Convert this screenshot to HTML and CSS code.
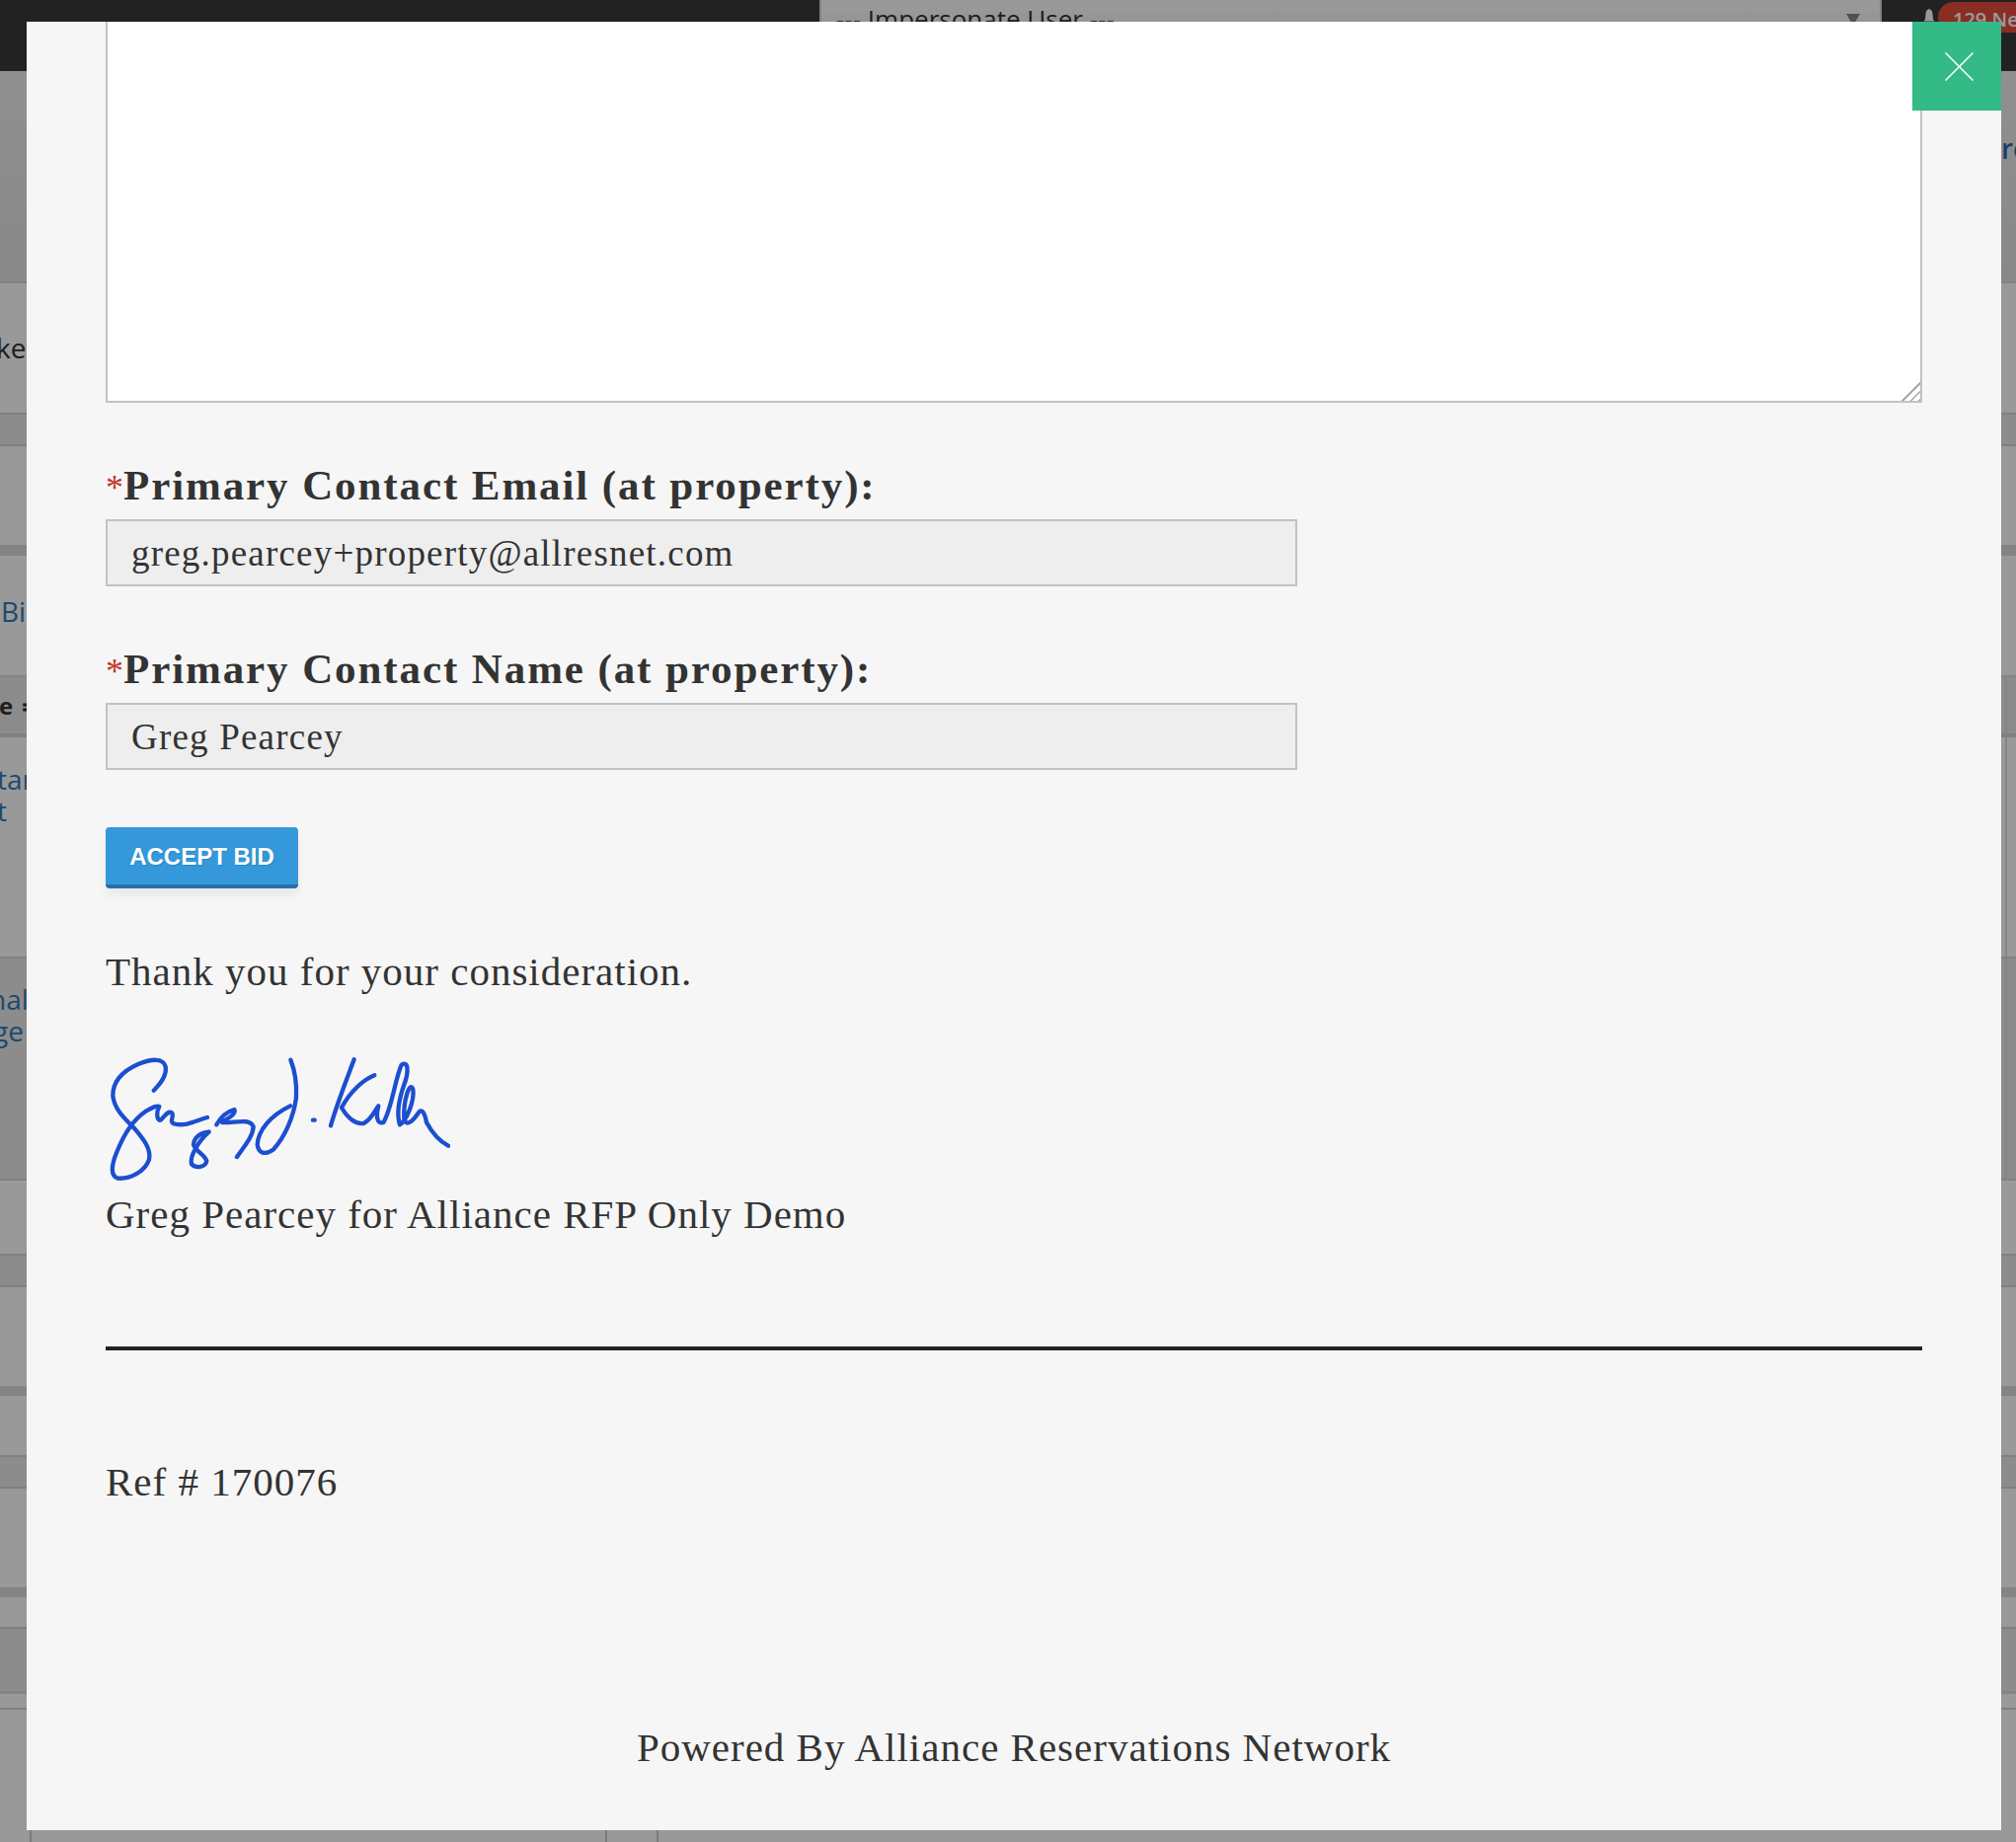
FILE: index.html
```html
<!DOCTYPE html>
<html lang="en">
<head>
    <meta charset="UTF-8">
    <title>Accept Bid</title>
    <link rel="stylesheet" href="styles.css">
</head>
<body>
    <header class="topbar">
        <div class="impersonate">
            <span>--- Impersonate User ---</span>
            <i class="caret"></i>
        </div>
        <svg class="bell" viewBox="0 0 10 14"><path d="M5 0C3 1 1.500 2 1.500 5L1 11H0V12.500H10V11H9L8.500 5C8.500 2 7 1 5 0Z"/></svg>
        <div class="badge">129 New</div>
    </header>

    <!-- Page behind the modal -->
    <main class="page">
        <div class="row head"><a class="right-link">re</a></div>
        <div class="row tabs"><span class="clip-text">ke</span></div>
        <div class="row sub"></div>
        <div class="row block"></div>
        <div class="row gap"></div>
        <div class="row title"><a class="clip-link">Bi</a></div>
        <div class="row thead"><b class="clip-head">e ≑</b><i class="cell-end"></i></div>
        <div class="row tr tr-first"><a class="clip-link">tar<br>t</a><i class="cell-end"></i></div>
        <div class="row tr tr-second"><a class="clip-link">nal<br>ge</a><i class="cell-end"></i></div>
        <div class="row tfoot"></div>
        <div class="row sub"></div>
        <div class="row block"></div>
        <div class="row gap"></div>
        <div class="row foot"></div>
        <div class="row sub"></div>
        <div class="row block"></div>
        <div class="row gap"></div>
        <div class="row pager"></div>
        <div class="row pager-sub"></div>
        <div class="row thin"></div>
        <div class="row rest">
            <i class="col col-a"></i>
            <i class="col col-b"></i>
            <i class="col col-c"></i>
        </div>
    </main>

    <div class="overlay"></div>

    <!-- Accept bid modal -->
    <section class="modal">
        <button class="close-btn" type="button">
            <svg viewBox="0 0 29 29"><path d="M0.500 0.500L28.500 28.500M28.500 0.500L0.500 28.500"/></svg>
        </button>

        <div class="notes-wrap">
            <textarea class="notes" readonly></textarea>
        </div>

        <div class="field">
            <label><span class="req">*</span>Primary Contact Email (at property):</label>
            <input type="text" value="greg.pearcey+property@allresnet.com" readonly>
        </div>
        <div class="field">
            <label><span class="req">*</span>Primary Contact Name (at property):</label>
            <input type="text" value="Greg Pearcey" readonly>
        </div>

        <button class="accept-btn" type="button">ACCEPT BID</button>

        <p class="thanks">Thank you for your consideration.</p>

        <svg class="signature" viewBox="0 0 1200 480">
            <path d="M197 158C215 140 238 115 233 85C225 58 190 62 150 78C105 98 72 130 73 175C78 215 105 240 140 275C165 305 190 335 183 368C170 405 125 428 88 425C65 418 68 385 85 345C105 295 130 250 172 222C190 212 205 202 214 207C205 222 205 250 218 248C232 235 240 218 252 226C262 235 240 255 262 260C295 268 330 248 360 240"/>
            <path d="M365 284C340 286 320 300 318 322C322 342 352 352 358 372C355 392 325 396 312 382C305 358 335 310 365 284"/>
            <path d="M388 262C400 240 420 222 442 216C450 232 415 245 405 255C440 258 490 240 500 268C498 300 470 330 450 360"/>
            <path d="M613 65C625 95 632 140 630 180C622 240 595 300 560 338C535 355 515 350 512 322C515 280 550 235 612 205"/>
            <path d="M681 248L686 248"/>
            <path d="M806 64C785 120 755 195 735 265"/>
            <path d="M868 112C835 125 795 160 768 210C785 240 810 262 835 258C860 245 868 220 880 205C872 235 875 262 895 255C920 215 930 125 950 80C972 65 972 105 958 140C942 185 935 230 945 262C965 250 990 190 985 155C975 125 955 190 958 245C965 270 985 250 1000 228C1012 210 1020 225 1026 255C1045 290 1065 312 1092 326"/>
        </svg>
        <p class="sign-name">Greg Pearcey for Alliance RFP Only Demo</p>

        <hr class="divider">

        <p class="ref">Ref # 170076</p>

        <p class="powered">Powered By Alliance Reservations Network</p>
    </section>
</body>
</html>
```

FILE: styles.css
```css
* {
    box-sizing: border-box;
}

body {
    margin: 0;
    height: 1866px;
    overflow: hidden;
    background-color: #fff;
    color: #333;
    font-family: "Open Sans", sans-serif;
    font-size: 28px;
}

/* top bar */
.topbar {
    display: flex;
    align-items: flex-start;
    height: 72px;
    background-color: #393939;
    overflow: hidden;
}

.impersonate {
    display: flex;
    flex-shrink: 0;
    align-items: center;
    justify-content: space-between;
    width: 1076px;
    height: 60px;
    margin: -11px 0 0 830px;
    padding: 0 20px 0 15px;
    background: linear-gradient(#fff 30%, #ececec);
    border: 2px solid #ddd;
    border-radius: 4px;
    font-size: 26px;
}

.caret {
    margin-top: 2px;
    border-left: 7px solid transparent;
    border-right: 7px solid transparent;
    border-top: 12px solid #888;
}

.bell {
    flex-shrink: 0;
    width: 10px;
    height: 14px;
    margin: 9px 0 0 43px;
    fill: #fff;
}

.badge {
    flex-shrink: 0;
    width: 120px;
    height: 31px;
    margin: 2px 0 0 4px;
    padding: 5px 0 0 15px;
    background-color: #e74c3c;
    border-radius: 16px 0 0 16px;
    color: #fff;
    font-size: 20px;
    font-weight: 600;
    line-height: 26px;
    white-space: nowrap;
}

/* page behind */
.page {
    display: flex;
    flex-direction: column;
    height: 1794px;
}

.row {
    display: flex;
    flex-shrink: 0;
    border-bottom: 2px solid #d5d5d5;
}

.head {
    height: 215px;
    background: linear-gradient(#f0f0f0, #e4e4e4);
    justify-content: flex-end;
    padding-top: 59px;
}

.tabs {
    height: 133px;
    padding-bottom: 2px;
    align-items: center;
}

.sub {
    height: 32px;
    background-color: #eaeaea;
}

.block {
    height: 100px;
    border-bottom: 0;
}

.gap {
    height: 10px;
    background-color: #dcdcdc;
    border-bottom: 0;
}

.title {
    height: 122px;
    padding-bottom: 10px;
    align-items: center;
    border-bottom: 0;
    border-top: 1px solid #e0e0e0;
}

.thead {
    height: 63px;
    background-color: #eaeaea;
    border-top: 2px solid #dedede;
    border-bottom: 4px solid #d5d5d5;
    align-items: center;
}

.tr {
    height: 224px;
    align-items: flex-start;
}

.tr-first {
    padding-top: 26px;
}

.tr-second {
    height: 225px;
    padding-top: 25px;
    background-color: #eaeaea;
}

.tfoot {
    height: 76px;
}

.foot {
    height: 62px;
}

.pager {
    height: 32px;
}

.pager-sub {
    height: 66px;
    background-color: #eaeaea;
    border-bottom: 3px solid #dedede;
}

.thin {
    height: 16px;
}

.rest {
    flex: 1;
    border-bottom: 0;
}

.cell-end {
    align-self: stretch;
    width: 11px;
    margin-left: auto;
    border-left: 2px solid #dedede;
}

.tr-first .cell-end {
    margin-top: -26px;
}

.tr-second .cell-end {
    margin-top: -25px;
}

.thead .cell-end {
    margin-top: -2px;
}

.clip-text {
    margin-left: -4px;
}

.clip-link {
    margin-left: 1px;
    color: #337ab7;
    line-height: 32px;
}

.tr-first .clip-link {
    margin-left: -3px;
}

.tr-second .clip-link {
    margin-left: -7px;
    text-indent: -4px;
}

.right-link {
    width: 29px;
    margin-right: -14px;
    color: #2a6cad;
    font-weight: 600;
    line-height: 38px;
}

.clip-head {
    margin-left: -1px;
    font-size: 24px;
    word-spacing: 2px;
}

.col {
    display: block;
    width: 2px;
    background-color: #ccc;
}

.col-a {
    margin-left: 30px;
}

.col-b {
    margin-left: 581px;
}

.col-c {
    margin-left: 50px;
}

.overlay {
    position: absolute;
    top: 0;
    left: 0;
    width: 100%;
    height: 100%;
    background-color: rgba(0, 0, 0, 0.4);
}

/* modal */
.modal {
    position: absolute;
    top: 22px;
    left: 27px;
    width: 2000px;
    height: 1832px;
    padding: 0 80px;
    overflow: hidden;
    background-color: #f6f6f6;
    font-family: "Liberation Serif", serif;
    font-size: 41px;
    letter-spacing: 1px;
    color: #333;
}

.close-btn {
    position: absolute;
    top: 0;
    right: 0;
    z-index: 1;
    display: flex;
    align-items: center;
    justify-content: center;
    width: 90px;
    height: 90px;
    padding: 0 0 0 4px;
    border: 0;
    background-color: #33ba87;
}

.close-btn svg {
    width: 29px;
    height: 29px;
    fill: none;
    stroke: #fff;
    stroke-width: 1.500;
}

.notes-wrap {
    position: relative;
}

/* resize grip */
.notes-wrap::after {
    content: "";
    position: absolute;
    right: 2px;
    bottom: 2px;
    width: 21px;
    height: 21px;
    background: repeating-linear-gradient(135deg, #fff 0 4px, #aaa 4px 6px);
    clip-path: polygon(100% 0, 100% 100%, 0 100%);
}

.notes {
    display: block;
    width: 100%;
    height: 386px;
    background-color: #fff;
    border: 2px solid #bdc3c7;
    border-top: 0;
    border-radius: 0;
    outline: 0;
    resize: none;
}

.field {
    width: 1207px;
    margin-top: 60px;
}

.field label {
    display: block;
    height: 50px;
    margin-bottom: 8px;
    font-size: 43px;
    font-weight: bold;
    letter-spacing: 1.9px;
    line-height: 48px;
    white-space: nowrap;
}

.req {
    color: #c0392b;
    font-weight: normal;
    font-size: 36px;
    letter-spacing: 0;
}

.field input {
    display: block;
    width: 100%;
    height: 68px;
    padding: 0 24px;
    background-color: #eee;
    border: 2px solid #bdc3c7;
    border-radius: 0;
    outline: 0;
    color: #333;
    font-family: "Liberation Serif", serif;
    font-size: 37px;
    letter-spacing: 1.200px;
}

.accept-btn {
    display: block;
    width: 195px;
    height: 62px;
    margin-top: 58px;
    padding: 2px 0 0;
    background-color: #3498db;
    border: 0;
    border-bottom: 4px solid #2a6fa5;
    border-radius: 4px;
    box-shadow: 0 8px 10px rgba(0, 0, 0, 0.05);
    color: #fff;
    font-family: "Liberation Sans", sans-serif;
    font-size: 24px;
    font-weight: bold;
    letter-spacing: 0;
    text-shadow: 1px 1px 0 #2a85c4;
}

.thanks,
.sign-name,
.ref,
.powered {
    margin: 0;
    line-height: 50px;
    white-space: nowrap;
}

.thanks {
    margin-top: 59px;
}

.signature {
    display: block;
    width: 400px;
    height: 160px;
    margin: 43px 0 0 -17px;
    fill: none;
    stroke: #1c4fcf;
    stroke-width: 13;
    stroke-linecap: round;
    stroke-linejoin: round;
}

.sign-name {
    margin-top: -7px;
}

.divider {
    height: 4px;
    margin: 109px 0 0;
    background-color: #222;
    border: 0;
}

.ref {
    margin-top: 108px;
}

.powered {
    margin-top: 219px;
    text-align: center;
}
```
